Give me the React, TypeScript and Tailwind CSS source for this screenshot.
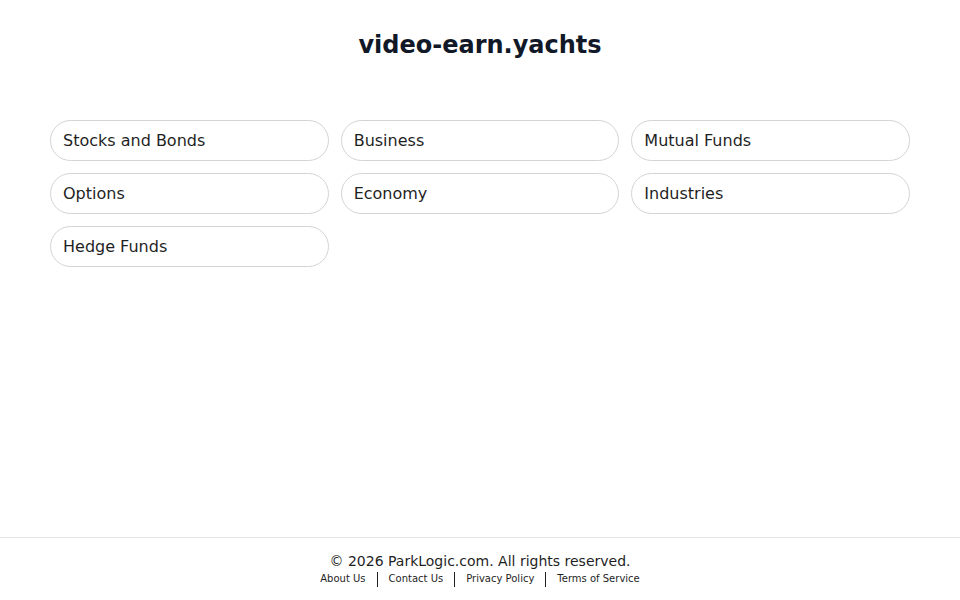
const LINKS = [
  'Stocks and Bonds',
  'Business',
  'Mutual Funds',
  'Options',
  'Economy',
  'Industries',
  'Hedge Funds',
];

const FOOTER_LINKS = ['About Us', 'Contact Us', 'Privacy Policy', 'Terms of Service'];

export default function App() {
  return (
    <div
      className="min-h-screen bg-white flex flex-col text-[#111827]"
      style={{ fontFamily: '"DejaVu Sans", sans-serif' }}
    >
      <main className="flex-1 flex flex-col items-center">
        <h1 className="mt-[30px] text-[24px] leading-[30px] font-bold text-[#111827]">video-earn.yachts</h1>

        <div className="mt-[60px] w-[860px] grid grid-cols-3 gap-x-[12px] gap-y-[12px]">
          {LINKS.map((label) => (
            <a
              key={label}
              href="#"
              className="h-[41px] flex items-center px-[12px] rounded-full border border-[#d4d4d4] text-[16px] text-[#1f1f1f]"
            >
              {label}
            </a>
          ))}
        </div>
      </main>

      <footer className="border-t border-[#e5e5e5] pt-[14px] pb-[13px] flex flex-col items-center">
        <p className="text-[14px] leading-[18px] text-[#1f1f1f]">© 2026 ParkLogic.com. All rights reserved.</p>
        <div className="mt-[1px] flex items-center text-[10px] leading-[16px] text-[#1f1f1f]">
          {FOOTER_LINKS.map((l, i) => (
            <div key={l} className="flex items-center">
              {i > 0 && <span className="mx-[11px] h-[15px] border-l-[1.5px] border-[#1f1f1f]" />}
              <a href="#">{l}</a>
            </div>
          ))}
        </div>
      </footer>
    </div>
  );
}
